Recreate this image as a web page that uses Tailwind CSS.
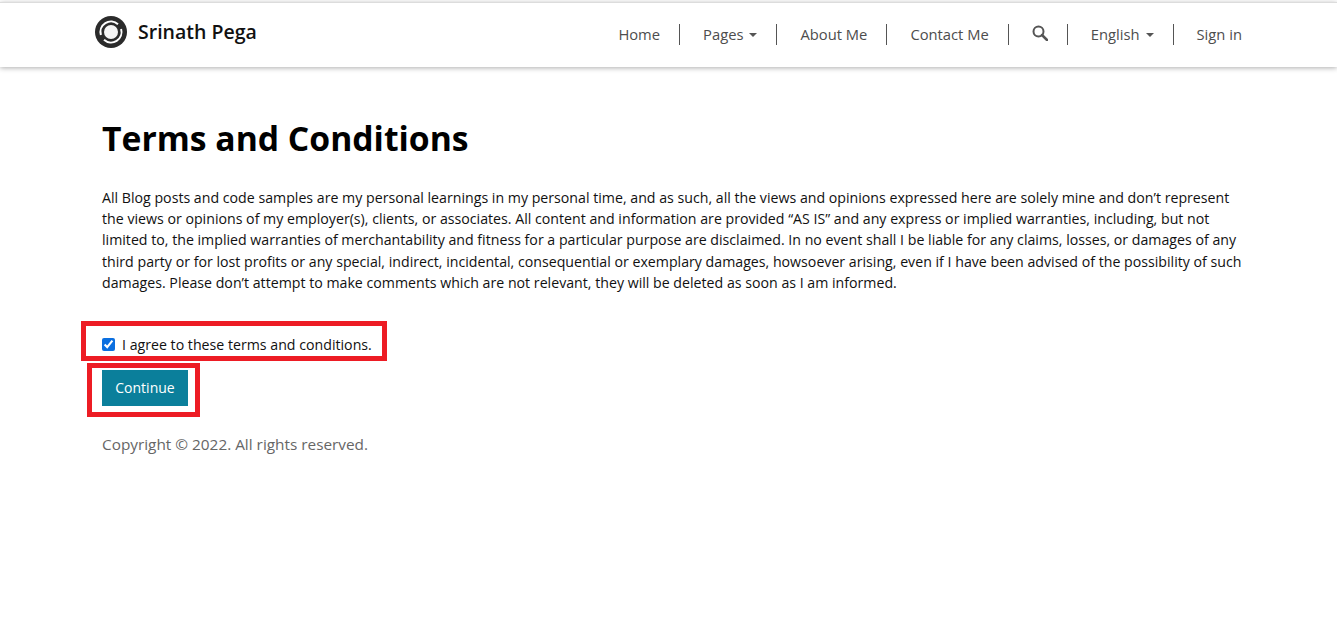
<!DOCTYPE html>
<html lang="en">
<head>
    <meta charset="UTF-8">
    <title>Terms and Conditions</title>
    <script src="https://cdn.jsdelivr.net/npm/@tailwindcss/browser@4"></script>
</head>
<body class="bg-white font-['Open_Sans','Noto_Sans',sans-serif] h-[631px] overflow-hidden">
    <header class="h-[65px] mt-[2px] border-t border-[#dcdcdc] bg-white shadow-[0_1px_5px_rgba(0,0,0,0.32)] flex items-center justify-between pl-[95px] pr-[95px]">
        <a class="flex items-center gap-[11px] -mt-[7px]">
            <svg width="32" height="32" viewBox="0 0 32 32" fill="none">
                <circle cx="16" cy="16" r="16" fill="#2b2b2b"/>
                <path d="M5.9 19A10.5 10.5 0 0 1 23 8.2" stroke="#fff" stroke-width="2"/>
                <path d="M26.1 13A10.5 10.5 0 0 1 9 23.8" stroke="#fff" stroke-width="2"/>
                <circle cx="16" cy="16" r="7" fill="#f5f5f5"/>
            </svg>
            <span class="text-[19.5px] font-semibold text-[#111]">Srinath Pega</span>
        </a>
        <nav class="flex items-center text-[14.75px] font-medium text-[#4d4d4d] -mt-[1px]">
            <a class="pr-[19px]">Home</a>
            <a class="h-[21px] border-l border-[#555] pl-[23px] pr-[19px] flex items-center gap-[6px]">Pages
                <span class="border-x-[4px] border-x-transparent border-t-[4px] border-t-[#555]"></span></a>
            <a class="h-[21px] border-l border-[#555] pl-[23px] pr-[19px] flex items-center">About Me</a>
            <a class="h-[21px] border-l border-[#555] pl-[23px] pr-[19px] flex items-center">Contact Me</a>
            <a class="h-[21px] border-l border-[#555] pl-[23px] pr-[19px] flex items-center">
                <svg class="-mt-[3px]" width="16" height="16" viewBox="0 0 16 16" fill="none" stroke="#555" stroke-width="2"><circle cx="6.5" cy="6.5" r="5"/><path d="M10 10l5 5" stroke-width="2.5" stroke-linecap="round"/></svg>
            </a>
            <a class="h-[21px] border-l border-[#555] pl-[23px] pr-[19px] flex items-center gap-[6px]">English
                <span class="border-x-[4px] border-x-transparent border-t-[4px] border-t-[#555]"></span></a>
            <a class="h-[21px] border-l border-[#555] pl-[23px] flex items-center">Sign in</a>
        </nav>
    </header>

    <main class="px-[102px] pt-[51px] relative">
        <h1 class="text-[33.7px] leading-[40px] font-bold text-black">Terms and Conditions</h1>
        <p class="mt-[28.8px] text-[14.18px] leading-[21.33px] text-[#111] whitespace-nowrap">
            All Blog posts and code samples are my personal learnings in my personal time, and as such, all the views and opinions expressed here are solely mine and don’t represent<br>
            the views or opinions of my employer(s), clients, or associates. All content and information are provided “AS IS” and any express or implied warranties, including, but not<br>
            limited to, the implied warranties of merchantability and fitness for a particular purpose are disclaimed. In no event shall I be liable for any claims, losses, or damages of any<br>
            third party or for lost profits or any special, indirect, incidental, consequential or exemplary damages, howsoever arising, even if I have been advised of the possibility of such<br>
            damages. Please don’t attempt to make comments which are not relevant, they will be deleted as soon as I am informed.
        </p>
        <label class="mt-[40.2px] flex items-center gap-[7px] text-[14.18px] leading-[21px] text-[#111]">
            <input type="checkbox" checked class="w-[13px] h-[13px] accent-[#0b6fe0]">
            I agree to these terms and conditions.
        </label>
        <button class="mt-[15px] block w-[86px] h-[36px] bg-[#0b7f9b] text-white text-[14px]">Continue</button>
        <p class="mt-[27px] text-[15.35px] leading-[22px] text-[#666]">Copyright © 2022. All rights reserved.</p>

        <div class="absolute left-[81px] top-[254px] w-[306px] h-[40px] border-[5px] border-[#ed1c24]"></div>
        <div class="absolute left-[87px] top-[296px] w-[113px] h-[54px] border-[5px] border-[#ed1c24]"></div>
    </main>
</body>
</html>
